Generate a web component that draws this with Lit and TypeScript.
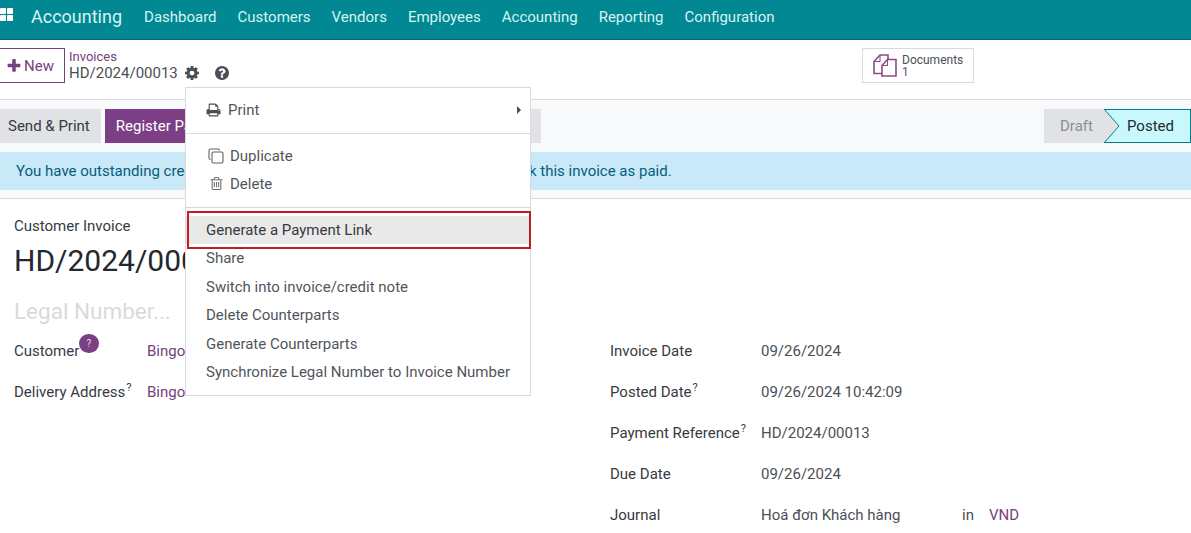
import { LitElement, html, css, svg } from 'lit';
import { customElement } from 'lit/decorators.js';

const navItems = ['Dashboard', 'Customers', 'Vendors', 'Employees', 'Accounting', 'Reporting', 'Configuration'];

const leftFields = [
  { label: 'Customer', value: 'Bingo', badge: true },
  { label: 'Delivery Address', value: 'Bingo', help: true },
];

const rightFields = [
  { label: 'Invoice Date', value: '09/26/2024' },
  { label: 'Posted Date', value: '09/26/2024 10:42:09', help: true },
  { label: 'Payment Reference', value: 'HD/2024/00013', help: true },
  { label: 'Due Date', value: '09/26/2024' },
];

const plainActions = [
  'Share',
  'Switch into invoice/credit note',
  'Delete Counterparts',
  'Generate Counterparts',
  'Synchronize Legal Number to Invoice Number',
];

// font-awesome 4 glyph shapes, 1792 grid
const gearIcon = svg`<path fill="currentColor" d="M1152 896q0-106-75-181t-181-75-181 75-75 181 75 181 181 75 181-75 75-181zm512-109v222q0 12-8 23t-20 13l-185 28q-19 54-39 91 35 50 107 138 10 12 10 25t-9 23q-27 37-99 108t-94 71q-12 0-26-9l-138-108q-44 23-91 38-16 136-29 186-7 28-36 28h-222q-14 0-24.500-8.500t-11.500-21.500l-28-184q-49-16-90-37l-141 107q-10 9-25 9-14 0-25-11-126-114-165-168-7-10-7-23 0-12 8-23 15-21 51-66.500t54-70.500q-27-50-41-99l-183-27q-13-2-21-12.500t-8-23.500v-222q0-12 8-23t19-13l186-28q14-46 39-92-40-57-107-138-10-12-10-24 0-10 9-23 26-36 98.500-107.500t94.500-71.500q13 0 26 10l138 107q44-23 91-38 16-136 29-186 7-28 36-28h222q14 0 24.500 8.500t11.500 21.500l28 184q49 16 90 37l142-107q9-9 24-9 13 0 25 10 129 119 165 170 7 8 7 22 0 12-8 23-15 21-51 66.500t-54 70.500q26 50 41 98l183 28q13 2 21 12.500t8 23.500z"/>`;
const helpIcon = svg`<path fill="currentColor" d="M1024 1376v-192q0-14-9-23t-23-9h-192q-14 0-23 9t-9 23v192q0 14 9 23t23 9h192q14 0 23-9t9-23zm256-672q0-88-55.500-163t-138.500-116-170-41q-243 0-371 213-15 24 8 42l132 100q7 6 19 6 16 0 25-12 53-68 86-92 34-24 86-24 48 0 85.500 26t37.500 59q0 38-20 61t-68 45q-63 28-115.500 86.500t-52.500 125.500v36q0 14 9 23t23 9h192q14 0 23-9t9-23q0-19 21.500-49.500t54.500-49.500q32-18 49-28.500t46-35 44.500-48 28-60.500 12.500-81zm384 192q0 209-103 385.500t-279.500 279.500-385.500 103-385.500-103-279.500-279.500-103-385.500 103-385.500 279.500-279.500 385.500-103 385.500 103 279.500 279.500 103 385.500z"/>`;
const printIcon = svg`<path fill="currentColor" d="M448 1536h896v-256h-896v256zm0-640h896v-384h-160q-40 0-68-28t-28-68v-160h-640v640zm1152 64q0-26-19-45t-45-19-45 19-19 45 19 45 45 19 45-19 19-45zm128 0v416q0 13-9.500 22.500t-22.500 9.500h-224v160q0 40-28 68t-68 28h-960q-40 0-68-28t-28-68v-160h-224q-13 0-22.500-9.500t-9.500-22.500v-416q0-79 56.500-135.500t135.500-56.500h64v-544q0-40 28-68t68-28h672q40 0 88 20t76 48l152 152q28 28 48 76t20 88v256h64q79 0 135.500 56.500t56.500 135.500z"/>`;
const plusIcon = svg`<path fill="currentColor" d="M1600 736v192q0 40-28 68t-68 28h-416v416q0 40-28 68t-68 28h-192q-40 0-68-28t-28-68v-416h-416q-40 0-68-28t-28-68v-192q0-40 28-68t68-28h416v-416q0-40 28-68t68-28h192q40 0 68 28t28 68v416h416q40 0 68 28t28 68z"/>`;
const trashIcon = svg`<path fill="currentColor" d="M704 736v576q0 14-9 23t-23 9h-64q-14 0-23-9t-9-23v-576q0-14 9-23t23-9h64q14 0 23 9t9 23zm256 0v576q0 14-9 23t-23 9h-64q-14 0-23-9t-9-23v-576q0-14 9-23t23-9h64q14 0 23 9t9 23zm256 0v576q0 14-9 23t-23 9h-64q-14 0-23-9t-9-23v-576q0-14 9-23t23-9h64q14 0 23 9t9 23zm128 724v-948h-896v948q0 22 7 40.500t14.500 27 10.500 8.500h832q3 0 10.500-8.500t14.500-27 7-40.500zm-672-1076h448l-48-117q-7-9-17-11h-317q-10 2-17 11zm928 32v64q0 14-9 23t-23 9h-96v948q0 83-47 143.500t-113 60.500h-832q-66 0-113-58.500t-47-141.500v-952h-96q-14 0-23-9t-9-23v-64q0-14 9-23t23-9h309l70-167q15-37 54-63t79-26h320q40 0 79 26t54 63l70 167h309q14 0 23 9t9 23z"/>`;

@customElement('app-root')
export class AppRoot extends LitElement {
  render() {
    return html`
      <nav class="navbar">
        <svg class="apps" width="13" height="13" viewBox="0 0 13 13">
          <rect x="0" y="0" width="6" height="6" rx="0.8" fill="#fff" />
          <rect x="7" y="0" width="6" height="6" rx="0.8" fill="#fff" />
          <rect x="0" y="7" width="6" height="6" rx="0.8" fill="#fff" />
          <rect x="7" y="7" width="6" height="6" rx="0.8" fill="#fff" />
        </svg>
        <span class="brand">Accounting</span>
        ${navItems.map((n) => html`<span class="nav-item">${n}</span>`)}
      </nav>

      <div class="control">
        <button class="new">
          <svg width="14" height="14" viewBox="128 128 1536 1536">${plusIcon}</svg>
          New
        </button>
        <div class="crumbs">
          <a>Invoices</a>
          <div class="crumb-current">
            <span>HD/2024/00013</span>
            <svg class="gear" width="14" height="14" viewBox="128 128 1536 1536">${gearIcon}</svg>
            <svg class="help" width="14" height="14" viewBox="128 128 1536 1536">${helpIcon}</svg>
          </div>
        </div>
        <div class="doc-btn">
          <svg width="24" height="23" viewBox="0 0 24 23" fill="none" stroke="#8a4d85" stroke-width="1.600">
            <path d="M9 19.500H1V7.500L7 1h8v6" />
            <path d="M1 7.500h6V1" stroke-width="1.100" />
            <path d="M9 11.500 14.500 5.500H23V22H9z" fill="#fff" />
            <path d="M9 11.500h5.500V5.500" stroke-width="1.100" />
          </svg>
          <div class="doc-text">
            <span>Documents</span>
            <span class="count">1</span>
          </div>
        </div>
      </div>

      <div class="status">
        <div class="actions">
          <button class="grey">Send &amp; Print</button>
          <button class="primary">Register Payment</button>
          <button class="grey wide">Reverse Entry</button>
        </div>
        <div class="steps">
          <span class="step draft">Draft</span>
          <span class="step posted">
            <svg class="arrow" width="16" height="34" viewBox="0 0 16 34">
              <path d="M0 0 L15 17 L0 34" fill="#e0e2e6" />
              <path d="M0 0 L15 17 L0 34" fill="none" stroke="#017e84" stroke-width="1" />
            </svg>
            Posted
          </span>
        </div>
      </div>

      <div class="alert">
        You have outstanding credits for this customer. You can allocate them to mark this invoice as paid.
      </div>

      <div class="content">
        <div class="sheet">
          <div class="type">Customer Invoice</div>
          <h1>HD/2024/00013</h1>
          <div class="legal">Legal Number...</div>
          <div class="columns">
            <div class="col left">
              ${leftFields.map(
                (f) => html`<div class="row">
                  <span class="label">${f.label}${f.help ? html`<sup>?</sup>` : ''}${f.badge
                    ? html`<span class="badge">?</span>`
                    : ''}</span>
                  <a class="value link">${f.value}</a>
                </div>`
              )}
            </div>
            <div class="col right">
              ${rightFields.map(
                (f) => html`<div class="row">
                  <span class="label">${f.label}${f.help ? html`<sup>?</sup>` : ''}</span>
                  <span class="value">${f.value}</span>
                </div>`
              )}
              <div class="row">
                <span class="label">Journal</span>
                <span class="value journal">Hoá đơn Khách hàng</span>
                <span class="value in">in</span>
                <a class="value link">VND</a>
              </div>
            </div>
          </div>
        </div>
      </div>

      <div class="menu">
        <div class="group print">
          <div class="item">
            <svg width="15" height="14" viewBox="0 128 1792 1536">${printIcon}</svg>
            <span>Print</span>
          </div>
          <span class="caret"></span>
        </div>
        <div class="group dup-group">
          <div class="item">
            <svg class="dup" width="16" height="16" viewBox="0 0 16 16" fill="none" stroke="#5c6167" stroke-width="1.100">
              <path d="M2.500 11.500A1.500 1.500 0 0 1 1 10V2.500A1.500 1.500 0 0 1 2.500 1H10a1.500 1.500 0 0 1 1.500 1.500" />
              <rect x="4" y="4" width="11" height="11" rx="1.500" />
            </svg>
            <span>Duplicate</span>
          </div>
          <div class="item">
            <svg class="trash" width="13" height="13" viewBox="128 128 1536 1536">${trashIcon}</svg>
            <span>Delete</span>
          </div>
        </div>
        <div class="group last">
          <div class="item highlighted">Generate a Payment Link</div>
          ${plainActions.map((a) => html`<div class="item">${a}</div>`)}
        </div>
      </div>
    `;
  }

  static styles = css`
    :host {
      display: block;
      position: relative;
      height: 533px;
      overflow: hidden;
      background: #fff;
      font-family: Roboto, sans-serif;
      font-size: 15px;
      color: #373a3f;
    }

    .navbar {
      display: flex;
      align-items: center;
      height: 40px;
      box-sizing: border-box;
      padding-bottom: 6px;
      background: #018892;
      border-bottom: 1px solid #05656b;
      color: #d6f4f4;
    }

    .apps {
      align-self: flex-start;
      margin-top: 8px;
      flex: none;
    }

    .brand {
      margin-left: 18px;
      margin-right: 22px;
      font-size: 18px;
    }

    .nav-item {
      margin-right: 21px;
    }

    .control {
      display: flex;
      height: 59px;
      border-bottom: 1px solid #d8dadd;
      box-sizing: content-box;
      position: relative;
    }

    .new {
      display: flex;
      align-items: center;
      gap: 3px;
      align-self: flex-start;
      margin: 8px 4px 0 -1px;
      width: 66px;
      height: 35px;
      background: #fff;
      border: 1px solid #74427c;
      color: #74427c;
      font: inherit;
      padding: 0 0 0 7px;
    }

    .crumbs {
      padding-top: 10px;
      flex: none;
      width: 793px;
    }

    .crumbs a {
      display: block;
      color: #74427c;
      font-size: 13px;
      line-height: 14px;
    }

    .crumb-current {
      display: flex;
      align-items: center;
      line-height: 18px;
      color: #4a4f56;
    }

    .gear {
      margin-left: 7.500px;
      color: #4a4f56;
    }

    .help {
      margin-left: 16px;
      color: #4a4f56;
    }

    .doc-btn {
      align-self: flex-start;
      margin-top: 8px;
      display: flex;
      align-items: center;
      gap: 5px;
      width: 112px;
      height: 35px;
      box-sizing: border-box;
      border: 1px solid #d8dadd;
      padding-left: 10px;
      font-size: 12px;
      line-height: 12px;
      color: #4a4f56;
    }

    .doc-text {
      display: flex;
      flex-direction: column;
    }

    .count {
      color: #74427c;
    }

    .status {
      display: flex;
      justify-content: space-between;
      align-items: flex-start;
      height: 52px;
      padding-top: 9px;
      box-sizing: border-box;
      background: #f8f9fa;
    }

    .actions {
      display: flex;
      gap: 4px;
    }

    .actions button {
      height: 34px;
      border: 0;
      font: inherit;
      white-space: nowrap;
    }

    .grey {
      background: #e0e2e6;
      color: #373a3f;
      padding: 0 11px 0 8px;
    }

    .primary {
      background: #7c3f85;
      color: #fff;
      padding: 0 11px;
    }

    .actions .wide {
      width: 293px;
    }

    .steps {
      display: flex;
      height: 34px;
    }

    .step {
      display: flex;
      align-items: center;
      box-sizing: border-box;
    }

    .draft {
      background: #e0e2e6;
      color: #8a8f94;
      width: 60px;
      padding-left: 16px;
    }

    .posted {
      position: relative;
      width: 87px;
      padding-left: 23px;
      background: #c8f8fb;
      border: 1px solid #017e84;
      border-left: 0;
      color: #22282e;
    }

    .arrow {
      position: absolute;
      left: 0;
      top: -1px;
    }

    .alert {
      height: 38px;
      line-height: 38px;
      padding-left: 16px;
      background: #c9e8f8;
      color: #055f7a;
      white-space: nowrap;
    }

    .content {
      padding-top: 8px;
      background: #f8f9fa;
    }

    .sheet {
      height: 400px;
      background: #fff;
      border-top: 1px solid #d8dadd;
      padding: 19px 14px 0;
    }

    .type {
      line-height: 17px;
    }

    h1 {
      margin: 8px 0 0;
      font-size: 30px;
      font-weight: 400;
      line-height: 36px;
      color: #22282e;
    }

    .legal {
      margin-top: 19px;
      font-size: 22.500px;
      line-height: 26px;
      color: #d8dadd;
    }

    .columns {
      display: flex;
      margin-top: 6px;
    }

    .col.left {
      width: 596px;
    }

    .row {
      display: flex;
      align-items: center;
      height: 41px;
    }

    .label {
      position: relative;
      color: #373a3f;
    }

    .left .label {
      width: 133px;
    }

    .right .label {
      width: 151px;
    }

    .value {
      color: #4a4f56;
    }

    .link {
      color: #74427c;
    }

    .journal {
      width: 201px;
    }

    .in {
      width: 27px;
    }

    sup {
      font-size: 11px;
      line-height: 0;
      vertical-align: 6px;
      margin-left: 1px;
    }

    .badge {
      position: absolute;
      left: 65px;
      top: -8px;
      width: 19.500px;
      height: 19.500px;
      border-radius: 50%;
      background: #7c3f85;
      color: #e8dbe9;
      font-size: 10px;
      line-height: 19.500px;
      text-align: center;
    }

    .menu {
      position: absolute;
      left: 185px;
      top: 87px;
      width: 346px;
      box-sizing: border-box;
      background: #fff;
      border: 1px solid #d8dadd;
      color: #51565c;
    }

    .group {
      border-bottom: 1px solid #d8dadd;
      padding: 8px 0;
    }

    .group.print {
      position: relative;
      padding: 8px 0 9px;
    }

    .group.dup-group {
      padding: 7px 0 9px;
    }

    .group.last {
      border-bottom: 0;
      padding: 7.600px 0 9px;
    }

    .item {
      display: flex;
      align-items: center;
      gap: 7px;
      height: 28.400px;
      padding-left: 20px;
    }

    .item svg {
      color: #4a4f56;
      flex: none;
    }

    .item .dup {
      margin: 0 -1px 0 2px;
    }

    .item .trash {
      margin-left: 4px;
      color: #6c7176;
    }

    .highlighted {
      position: relative;
      background: #e9e9ea;
      color: #373a3f;
    }

    .highlighted::after {
      content: '';
      position: absolute;
      inset: -5px -1px -5px 1px;
      border: 2px solid #c01c22;
    }

    .caret {
      position: absolute;
      right: 9px;
      top: 18px;
      border-left: 4px solid #4a4f56;
      border-top: 4px solid transparent;
      border-bottom: 4px solid transparent;
    }
  `;
}

declare global {
  interface HTMLElementTagNameMap {
    'app-root': AppRoot;
  }
}
